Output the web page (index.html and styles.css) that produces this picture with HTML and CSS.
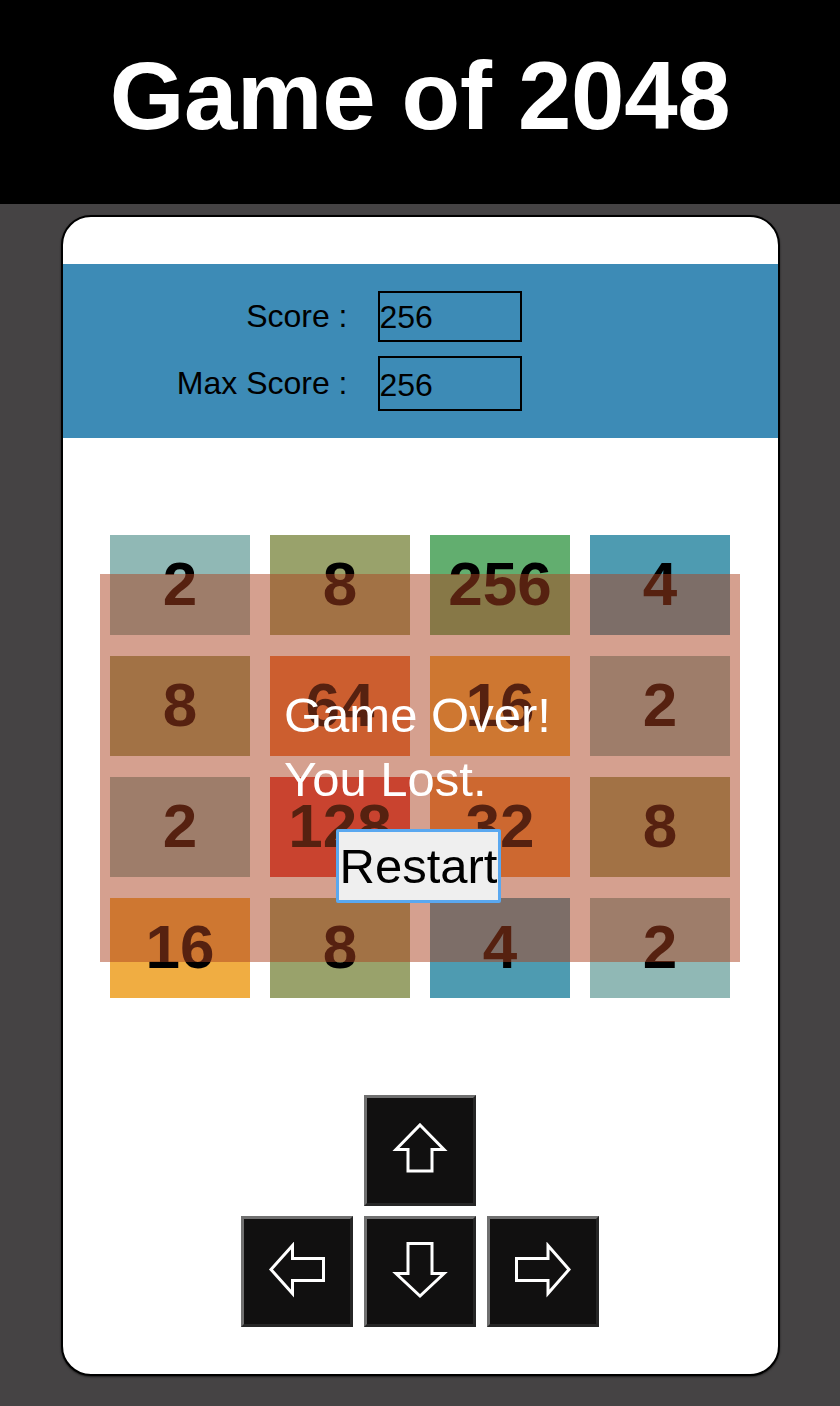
FILE: index.html
```html
<!DOCTYPE html>
<html lang="en">
<head>
<meta charset="utf-8">
<title>Game of 2048</title>
<link rel="stylesheet" href="styles.css">
</head>
<body>
<header class="top">
  <h1 class="title">Game of 2048</h1>
</header>
<main class="card">
  <section class="scores">
    <span class="label">Score :</span>
    <div class="box">256</div>
    <span class="label">Max Score :</span>
    <div class="box box-tall">256</div>
  </section>
  <section class="play">
    <div class="board">
      <div class="grid">
        <div class="tile t2">2</div>
        <div class="tile t8">8</div>
        <div class="tile t256">256</div>
        <div class="tile t4">4</div>
        <div class="tile t8">8</div>
        <div class="tile t64">64</div>
        <div class="tile t16">16</div>
        <div class="tile t2">2</div>
        <div class="tile t2">2</div>
        <div class="tile t128">128</div>
        <div class="tile t32">32</div>
        <div class="tile t8">8</div>
        <div class="tile t16">16</div>
        <div class="tile t8">8</div>
        <div class="tile t4">4</div>
        <div class="tile t2">2</div>
      </div>
      <div class="overlay">
        <p class="msg">Game Over! You Lost.</p>
        <button class="restart" type="button">Restart</button>
      </div>
    </div>
  </section>
  <section class="controls">
    <button class="key key-up" type="button" aria-label="Up">
      <svg width="60" height="60" viewBox="0 0 60 60"><polygon points="30,4 54,28.5 42,28.5 42,50 18,50 18,28.5 6,28.5"/></svg>
    </button>
    <button class="key key-left" type="button" aria-label="Left">
      <svg width="60" height="60" viewBox="0 0 60 60"><polygon points="4,27.5 25.5,3.5 25.5,16.5 56.5,16.5 56.5,38.5 25.5,38.5 25.5,51.5"/></svg>
    </button>
    <button class="key key-down" type="button" aria-label="Down">
      <svg width="60" height="60" viewBox="0 0 60 60"><polygon points="18,1.5 42,1.5 42,31.5 54,31.5 30,54 6,31.5 18,31.5"/></svg>
    </button>
    <button class="key key-right" type="button" aria-label="Right">
      <svg width="60" height="60" viewBox="0 0 60 60"><polygon points="56,27.5 35,3.5 35,16.5 3.5,16.5 3.5,38.5 35,38.5 35,51.5"/></svg>
    </button>
  </section>
</main>
</body>
</html>
```

FILE: styles.css
```css
* {
  box-sizing: border-box;
}

html, body {
  margin: 0;
  padding: 0;
}

body {
  background: #454344;
  font-family: "Liberation Sans", Arial, sans-serif;
  min-height: 1406px;
}

.top {
  background: #000;
  height: 204px;
  padding-top: 41px;
}

.title {
  margin: 0;
  color: #fff;
  text-align: center;
  font-size: 96px;
  font-weight: bold;
  line-height: normal;
  letter-spacing: -0.3px;
}

.card {
  width: 719px;
  margin: 11px auto 0;
  background: #fff;
  border: 2px solid #000;
  border-radius: 30px;
  padding: 47px 0;
  box-shadow: 0 1px 2px rgba(0, 0, 0, 0.6);
}

.scores {
  background: #3d8bb6;
  display: grid;
  grid-template-columns: 285px 144px;
  grid-template-rows: 51px 55px;
  column-gap: 30px;
  row-gap: 14px;
  align-items: center;
  padding: 27px 0;
  height: 174px;
}

.label {
  font-size: 32px;
  color: #000;
  text-align: right;
}

.box {
  height: 51px;
  border: 2px solid #000;
  font-size: 32px;
  color: #000;
  display: flex;
  align-items: center;
  padding: 2px 0 0 0;
}

.box-tall {
  height: 55px;
  padding-top: 4px;
}

.play {
  padding: 97px 0;
  display: flex;
  justify-content: center;
}

.board {
  position: relative;
  width: 620px;
}

.grid {
  display: grid;
  grid-template-columns: repeat(4, 140px);
  grid-auto-rows: 100px;
  column-gap: 20px;
  row-gap: 21px;
}

.tile {
  display: flex;
  align-items: center;
  justify-content: center;
  font-size: 62px;
  font-weight: bold;
  color: #000;
  padding-bottom: 3px;
}

.t2 { background: #90b8b5; }
.t4 { background: #4e9bb1; }
.t8 { background: #99a26b; }
.t16 { background: #f0ad42; }
.t32 { background: #ef8f41; }
.t64 { background: #ed7b3f; }
.t128 { background: #e7453f; }
.t256 { background: #62ae6f; }

.overlay {
  position: absolute;
  left: -10px;
  top: 39px;
  width: 640px;
  height: 388px;
  background: rgba(171, 65, 31, 0.5);
  display: flex;
  flex-direction: column;
  align-items: center;
  padding-top: 109px;
}

.msg {
  margin: 0 0 18px;
  width: 272px;
  color: #fff;
  font-size: 49px;
  line-height: 64px;
  text-align: left;
}

.restart {
  height: 74px;
  padding: 0 1px;
  background: #efefef;
  border: 3px solid #5aa8f0;
  border-radius: 2px;
  font-family: "Liberation Sans", Arial, sans-serif;
  font-size: 49px;
  color: #000;
  line-height: 1;
  margin-left: -3px;
}

.controls {
  display: grid;
  grid-template-columns: repeat(3, 112px);
  grid-template-rows: repeat(2, 111px);
  column-gap: 11px;
  row-gap: 10px;
  justify-content: center;
}

.key {
  background: #111010;
  border: 3px solid;
  border-color: #707070 #262626 #262626 #707070;
  padding: 0;
  display: flex;
  align-items: center;
  justify-content: center;
}

.key svg {
  display: block;
}

.key polygon {
  fill: none;
  stroke: #fff;
  stroke-width: 3;
  stroke-linejoin: miter;
}

.key-up { grid-column: 2; grid-row: 1; }
.key-left { grid-column: 1; grid-row: 2; }
.key-down { grid-column: 2; grid-row: 2; }
.key-right { grid-column: 3; grid-row: 2; }
```
